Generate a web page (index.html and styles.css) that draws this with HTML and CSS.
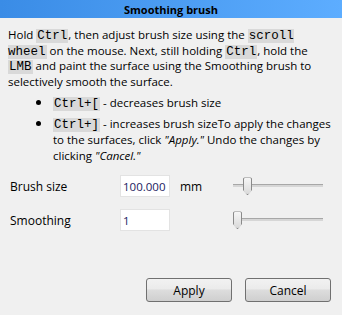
FILE: index.html
```html
<!DOCTYPE html>
<html lang="en">
<head>
    <meta charset="UTF-8">
    <title>Smoothing brush</title>
    <link rel="stylesheet" href="styles.css">
</head>
<body>
    <div class="title-bar">Smoothing brush</div>

    <div class="content">
        <p class="intro">Hold <code>Ctrl</code>, then adjust brush size using the <code>scroll wheel</code> on the mouse. Next, still holding <code>Ctrl</code>, hold the <code>LMB</code> and paint the surface using the Smoothing brush to selectively smooth the surface.</p>

        <ul class="keys">
            <li><code>Ctrl+[</code> - decreases brush size</li>
            <li><code>Ctrl+]</code> - increases brush sizeTo apply the changes to the surfaces, click <em>"Apply."</em> Undo the changes by clicking <em>"Cancel."</em></li>
        </ul>

        <div class="form">
            <label class="field-label">Brush size</label>
            <input class="field-input" type="text" value="100.000">
            <span class="unit">mm</span>
            <div class="slider"><div class="thumb" style="left: 10px"></div></div>

            <label class="field-label">Smoothing</label>
            <input class="field-input" type="text" value="1">
            <span class="unit"></span>
            <div class="slider"><div class="thumb" style="left: 0px"></div></div>
        </div>
    </div>

    <div class="buttons">
        <button class="btn">Apply</button>
        <button class="btn">Cancel</button>
    </div>
</body>
</html>
```
FILE: styles.css
```css
html, body {
    margin: 0;
    padding: 0;
    height: 100%;
}
body {
    font-family: 'Open Sans', 'Noto Sans', sans-serif;
    font-size: 11.5px;
    color: #000;
    background: #f0f0f0;
    display: flex;
    flex-direction: column;
}
.title-bar {
    height: 18px;
    line-height: 19px;
    text-align: center;
    font-weight: bold;
    font-size: 11px;
    color: #000;
    background: linear-gradient(90deg, #3a8ce6, #5dadff);
}
.content {
    padding: 9px 8px 0 8px;
    flex: 1;
}
.intro {
    margin: 0;
    line-height: 15.6px;
}
code {
    font-family: 'Liberation Mono', 'Courier New', monospace;
    font-size: 12.5px;
    line-height: 1;
    background: #d9d9d9;
    padding: 0 1px;
}
.keys {
    margin: 4px 0 0 0;
    padding: 0 0 0 45px;
    line-height: 16px;
}
.keys li {
    margin-bottom: 3px;
}
.keys li::marker {
    font-size: 15px;
}
.form {
    margin-top: 11px;
    display: grid;
    grid-template-columns: 110px 50px 10px 53px 90px;
    row-gap: 12px;
    align-items: center;
    padding-left: 2px;
}
.field-label {
    font-size: 12px;
}
.field-input {
    box-sizing: border-box;
    width: 50px;
    height: 22px;
    border: 1px solid #e3e3e3;
    background: #fff;
    font-family: inherit;
    font-size: 11.5px;
    padding: 0 2px;
    color: #1a1a5e;
    grid-column: 2;
}
.unit {
    font-size: 12px;
    grid-column: 4;
}
.slider {
    position: relative;
    height: 20px;
    width: 90px;
    grid-column: 5;
}
.slider::before {
    content: "";
    position: absolute;
    left: 0;
    right: 0;
    top: 8px;
    height: 2px;
    background: #d6d6d6;
    border-top: 1px solid #a7a7a7;
}
.thumb {
    position: absolute;
    top: 1px;
    width: 9px;
    height: 18px;
    box-sizing: border-box;
    border: 1px solid #8a8a8a;
    border-radius: 2px 2px 4px 4px;
    background: linear-gradient(#f6f6f6, #d9d9d9);
    clip-path: polygon(0 0, 100% 0, 100% 70%, 50% 100%, 0 70%);
}
.buttons {
    display: flex;
    justify-content: flex-end;
    gap: 13px;
    padding: 0 11px 13px 0;
}
.btn {
    width: 86px;
    height: 24px;
    font-family: inherit;
    font-size: 12px;
    color: #000;
    border: 1px solid #707070;
    border-radius: 3px;
    background: linear-gradient(#f2f2f2 0%, #ebebeb 45%, #dddddd 50%, #cfcfcf 100%);
}
```
